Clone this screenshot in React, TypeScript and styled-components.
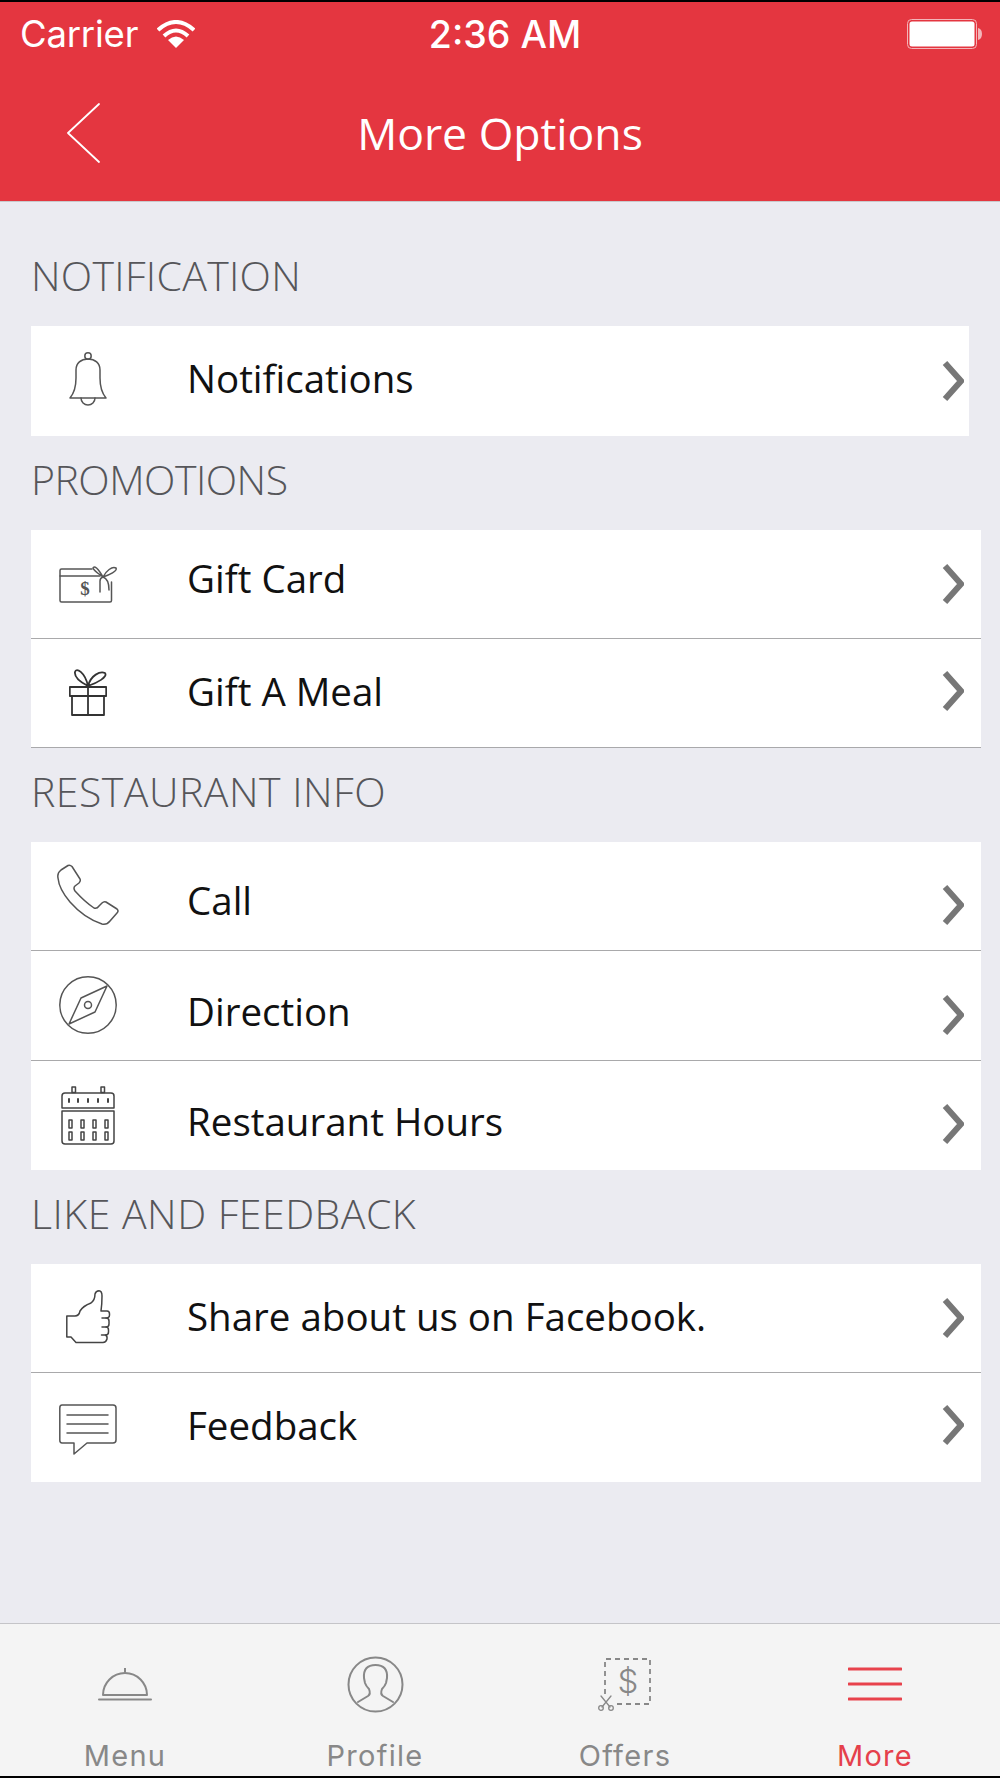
import React from "react";
import styled, { createGlobalStyle } from "styled-components";

const Global = createGlobalStyle`
  html, body { margin: 0; padding: 0; }
  body { background: #000; font-family: "Open Sans", "Noto Sans", sans-serif; }
  * { box-sizing: border-box; }
`;

const Page = styled.div`
  width: 1000px;
  height: 1778px;
  display: flex;
  flex-direction: column;
  background: #ebebf1;
  border-top: 2px solid #000;
  border-bottom: 2px solid #000;
`;

const TopArea = styled.header`
  height: 200px;
  flex: none;
  background: #e43640;
  border-bottom: 1px solid #c9c9cc;
  color: #fff;
  display: flex;
  flex-direction: column;
`;

const StatusBar = styled.div`
  height: 60px;
  padding: 4px 18px 0 20px;
  display: grid;
  grid-template-columns: 1fr auto 1fr;
  align-items: center;
  font-family: "Inter", sans-serif;
`;

const StatusLeft = styled.div`
  display: flex;
  align-items: center;
  gap: 19px;
  font-size: 36.500px;
  letter-spacing: -0.2px;
`;

const StatusRight = styled.div`
  display: flex;
  justify-content: flex-end;
`;

const Time = styled.div`
  font-size: 37.500px;
  font-weight: 500;
  padding-left: 8px;
`;

const NavBar = styled.div`
  flex: 1;
  display: grid;
  grid-template-columns: 1fr auto 1fr;
  align-items: center;
  padding: 2px 67px 0;
`;

const Title = styled.h1`
  margin: 0;
  font-size: 44.500px;
  font-weight: 400;
  line-height: 60px;
  color: #fff;
`;

const Content = styled.main`
  flex: 1;
  padding: 30px 19px 0 31px;
`;

const SectionLabel = styled.h2<{ $tracking: number }>`
  margin: 0;
  height: 94px;
  padding: 13px 0 0;
  font-size: 41px;
  line-height: 60px;
  font-weight: 300;
  color: #56565a;
  letter-spacing: ${(p) => p.$tracking}px;
`;

const Card = styled.section<{ $height: number; $narrow?: boolean }>`
  height: ${(p) => p.$height}px;
  margin-right: ${(p) => (p.$narrow ? 12 : 0)}px;
  background: #fff;
  display: grid;
  grid-auto-rows: 1fr;
`;

const Row = styled.div<{ $narrow?: boolean; $line?: boolean }>`
  display: flex;
  align-items: center;
  padding-right: ${(p) => (p.$narrow ? 5 : 17)}px;
  border-bottom: ${(p) => (p.$line ? "1px solid #a9a9ab" : "none")};
`;

/* The reference's icons, labels and chevrons sit a little off the row's centre, row by row. */
const IconSlot = styled.div<{ $shift: number }>`
  width: 114px;
  flex: none;
  margin-top: ${(p) => p.$shift * 2}px;
  display: flex;
  justify-content: center;
  align-items: center;
`;

const RowText = styled.span<{ $shift: number }>`
  flex: 1;
  margin-left: 42px;
  margin-top: ${(p) => p.$shift * 2}px;
  font-size: 38.500px;
  line-height: 50px;
  color: #111;
`;

const ChevronSlot = styled.span<{ $shift: number }>`
  display: block;
  flex: none;
  margin-top: ${(p) => p.$shift * 2}px;
`;

const Line = styled.svg<{ $color?: string; $w?: number }>`
  display: block;
  flex: none;
  fill: none;
  stroke: ${(p) => p.$color ?? "#555"};
  stroke-width: ${(p) => p.$w ?? 1.5};
  stroke-linejoin: round;
  stroke-linecap: round;
`;

const TabBar = styled.nav`
  height: 153px;
  flex: none;
  background: #f4f4f4;
  border-top: 1px solid #c4c4c8;
  display: grid;
  grid-template-columns: repeat(4, 1fr);
  padding-top: 30px;
`;

const Tab = styled.div<{ $active?: boolean }>`
  display: flex;
  flex-direction: column;
  align-items: center;
  color: ${(p) => (p.$active ? "#e5404b" : "#888")};
`;

const TabIcon = styled.div`
  height: 60px;
  display: flex;
  align-items: center;
  justify-content: center;
`;

const TabLabel = styled.span`
  margin-top: 25px;
  font-family: "Inter", sans-serif;
  font-size: 29px;
  line-height: 34px;
  letter-spacing: 1.300px;
`;

const Chevron = () => (
  <Line width="22" height="42" viewBox="0 0 22 42" $color="#777" $w={6}>
    <polyline points="3,3 19,21 3,39" strokeLinecap="butt" strokeLinejoin="miter" />
  </Line>
);

const Bell = () => (
  <Line width="38" height="55" viewBox="0 0 38 55">
    <circle cx="19" cy="4" r="3.200" />
    <path d="M1 46C6 40 7 34 7 26V18C7 11 12 7 19 7C26 7 31 11 31 18V26C31 34 32 40 37 46Z" />
    <path d="M12 46A7 7 0 0 0 26 46" />
  </Line>
);

const DollarText = styled.text`
  font-family: "Liberation Serif", serif;
  font-size: 19px;
  font-weight: 700;
  fill: #555;
  stroke: none;
`;

const GiftCard = () => (
  <Line width="59" height="38" viewBox="0 0 59 38">
    <path d="M33 4H2.500Q1 4 1 5.500V35.500Q1 37 2.500 37H51Q52.500 37 52.500 35.500V17" />
    <path d="M1 11H41" />
    <path d="M44 12C40 9 35 6 34 3C35 0 39 3 44 12C47 6 53 1 57 3C59 6 50 10 44 12Z" />
    <path d="M41 27V16Q41 13 44 12Q50 14 50 25" />
    <DollarText x="26" y="30" textAnchor="middle">$</DollarText>
  </Line>
);

const Gift = () => (
  <Line width="38" height="48" viewBox="0 0 38 48" $color="#333" $w={1.800}>
    <path d="M19 18C13 15 5 10 6 4C7 -1 16 4 19 18C22 7 31 3 36 5C39 9 28 15 19 18Z" />
    <rect x="0.800" y="19" width="36.400" height="9" />
    <rect x="3" y="28" width="32" height="19" />
    <path d="M19 19V47" />
  </Line>
);

const Phone = () => (
  <Line width="62" height="62" viewBox="0 0 62 62">
    <path d="M11 1.500Q13 .5 15 2.500L23 15Q24 17 22 19L18 22Q16 24 18 27Q28 38 37 44Q40 45 42 42L45 39Q47 37 49 38L60 45Q62 47 60 49L53 57Q50 61 45 60Q27 54 13 38Q2 25 1 14Q0 9 4 6Z" />
  </Line>
);

const Compass = () => (
  <Line width="58" height="58" viewBox="0 0 58 58">
    <circle cx="29" cy="29" r="28.200" />
    <path d="M48 10L36 36L10 48L22 22Z" />
    <circle cx="29" cy="29" r="3.500" />
  </Line>
);

const Calendar = () => (
  <Line width="54" height="59" viewBox="0 0 54 59" $color="#444">
    <rect x="11" y="1" width="3.500" height="5.500" />
    <rect x="40" y="1" width="3.500" height="5.500" />
    <path d="M1 22V10Q1 7 4 7H50Q53 7 53 10V22Z" />
    <path d="M1 25H53V55Q53 58 50 58H4Q1 58 1 55Z" />
    <path d="M8 13V16M17 13V16M27 13V16M37 13V16M47 13V16" strokeWidth="2" />
    <rect x="8" y="34" width="3" height="8" />
    <rect x="20" y="34" width="3" height="8" />
    <rect x="32" y="34" width="3" height="8" />
    <rect x="44" y="34" width="3" height="8" />
    <rect x="8" y="46" width="3" height="8" />
    <rect x="20" y="46" width="3" height="8" />
    <rect x="32" y="46" width="3" height="8" />
    <rect x="44" y="46" width="3" height="8" />
  </Line>
);

const Thumb = () => (
  <Line width="45" height="54" viewBox="0 0 45 54" $color="#444">
    <path d="M.8 26H9Q13 26 14 21Q17 16 25 13Q29 10 29 4Q30 .8 33 .8Q36 1 36 6Q36 14 35 21H41Q43.500 21 43.500 24V25Q43.500 28 40 28Q43 28 43 31V34Q43 37 40 37Q42.500 37 42.500 40V42Q42.500 45 39.500 45Q41.500 46 41 49Q40 52.500 37 52.500H10L5 47H.8Z" />
    <path d="M40 28H36M40 37H36M39.500 45H35.500" />
  </Line>
);

const Comment = () => (
  <Line width="58" height="52" viewBox="0 0 58 52">
    <path d="M3 1H54Q57 1 57 4V36Q57 39 54 39H28L15 50V39H3Q0.800 39 0.800 36V4Q0.800 1 3 1Z" />
    <path d="M8 11H49M8 20H49M8 29H49" />
  </Line>
);

const Wifi = () => (
  <svg width="38" height="28" viewBox="0 0 38 28" fill="none" stroke="#fff" strokeWidth="4">
    <path d="M1 10Q19 -6 37 10" />
    <path d="M7 16Q19 5 31 16" />
    <path d="M11 20Q19 13 27 20L19 28Z" fill="#fff" stroke="none" />
  </svg>
);

const Battery = () => (
  <svg width="75" height="30" viewBox="0 0 75 30" fill="none">
    <rect x="0.500" y="0.500" width="69" height="29" rx="4" stroke="#f3b5b9" />
    <rect x="2.500" y="2.500" width="65" height="25" rx="2.500" fill="#fff" />
    <path d="M71 9Q75 10 75 15Q75 20 71 21Z" fill="#f3b5b9" />
  </svg>
);

const Back = () => (
  <Line width="33" height="60" viewBox="0 0 33 60" $color="#fff" $w={1.800}>
    <polyline points="32,1 1,30 32,59" />
  </Line>
);

const Cloche = () => (
  <Line width="54" height="33" viewBox="0 0 54 33" $color="#888" $w={2}>
    <path d="M27 0V4" />
    <path d="M5 27A22 22 0 0 1 49 27Z" />
    <path d="M1 31.500H53" />
  </Line>
);

const Profile = () => (
  <Line width="57" height="57" viewBox="0 0 57 57" $color="#888" $w={2}>
    <circle cx="28.500" cy="28.500" r="27" />
    <path d="M11 46L21 40Q24 38 22 33Q19 30 18 27L17 22Q16 9 28.500 9Q41 9 40 22L39 27Q38 30 35 33Q33 38 36 40L46 46" />
  </Line>
);

const OfferSign = styled.text`
  font-family: "Inter", sans-serif;
  font-size: 33px;
  font-weight: 300;
  fill: #888;
  stroke: none;
`;

const Offers = () => (
  <Line width="54" height="53" viewBox="0 0 54 53" $color="#888" $w={1.800}>
    <path d="M7 36V1H52V46H16" strokeDasharray="5 4" strokeLinecap="butt" />
    <OfferSign x="30" y="35" textAnchor="middle">$</OfferSign>
    <g strokeWidth="1.300">
      <path d="M13 38L4 49M3 38L12 49" />
      <circle cx="3" cy="50" r="2.300" />
      <circle cx="13" cy="50" r="2.300" />
    </g>
  </Line>
);

const Hamburger = () => (
  <Line width="54" height="34" viewBox="0 0 54 34" $color="#e8424c" $w={3}>
    <path d="M1 2H53M1 17H53M1 32H53" />
  </Line>
);

type Item = { icon: React.ReactNode; text: string; iconShift: number; textShift: number; chevronShift: number };

const sections: {
  label: string;
  tracking: number;
  height: number;
  narrow?: boolean;
  lastLine?: boolean;
  items: Item[];
}[] = [
  {
    label: "NOTIFICATION",
    tracking: 0.3,
    height: 110,
    narrow: true,
    items: [{ icon: <Bell />, text: "Notifications", iconShift: -2, textShift: -3, chevronShift: 0 }],
  },
  {
    label: "PROMOTIONS",
    tracking: -0.5,
    height: 218,
    lastLine: true,
    items: [
      { icon: <GiftCard />, text: "Gift Card", iconShift: 0, textShift: -6, chevronShift: 0 },
      { icon: <Gift />, text: "Gift A Meal", iconShift: -1, textShift: -2, chevronShift: -2 },
    ],
  },
  {
    label: "RESTAURANT INFO",
    tracking: 0.5,
    height: 328,
    items: [
      { icon: <Phone />, text: "Call", iconShift: -1, textShift: 4, chevronShift: 9 },
      { icon: <Compass />, text: "Direction", iconShift: 0, textShift: 6, chevronShift: 10 },
      { icon: <Calendar />, text: "Restaurant Hours", iconShift: 0, textShift: 6, chevronShift: 9 },
    ],
  },
  {
    label: "LIKE AND FEEDBACK",
    tracking: 0.5,
    height: 218,
    items: [
      { icon: <Thumb />, text: "Share about us on Facebook.", iconShift: -1, textShift: -2, chevronShift: 0 },
      { icon: <Comment />, text: "Feedback", iconShift: 2, textShift: -3, chevronShift: -3 },
    ],
  },
];

const tabs = [
  { label: "Menu", icon: <Cloche /> },
  { label: "Profile", icon: <Profile /> },
  { label: "Offers", icon: <Offers /> },
  { label: "More", icon: <Hamburger />, active: true },
];

export default function App() {
  return (
    <Page>
      <Global />
      <TopArea>
        <StatusBar>
          <StatusLeft>
            Carrier
            <Wifi />
          </StatusLeft>
          <Time>2:36 AM</Time>
          <StatusRight>
            <Battery />
          </StatusRight>
        </StatusBar>
        <NavBar>
          <Back />
          <Title>More Options</Title>
        </NavBar>
      </TopArea>
      <Content>
        {sections.map((s) => (
          <React.Fragment key={s.label}>
            <SectionLabel $tracking={s.tracking}>{s.label}</SectionLabel>
            <Card $height={s.height} $narrow={s.narrow}>
              {s.items.map((it, i) => (
                <Row key={it.text} $narrow={s.narrow} $line={i < s.items.length - 1 || s.lastLine}>
                  <IconSlot $shift={it.iconShift}>{it.icon}</IconSlot>
                  <RowText $shift={it.textShift}>{it.text}</RowText>
                  <ChevronSlot $shift={it.chevronShift}>
                    <Chevron />
                  </ChevronSlot>
                </Row>
              ))}
            </Card>
          </React.Fragment>
        ))}
      </Content>
      <TabBar>
        {tabs.map((t) => (
          <Tab key={t.label} $active={t.active}>
            <TabIcon>{t.icon}</TabIcon>
            <TabLabel>{t.label}</TabLabel>
          </Tab>
        ))}
      </TabBar>
    </Page>
  );
}
